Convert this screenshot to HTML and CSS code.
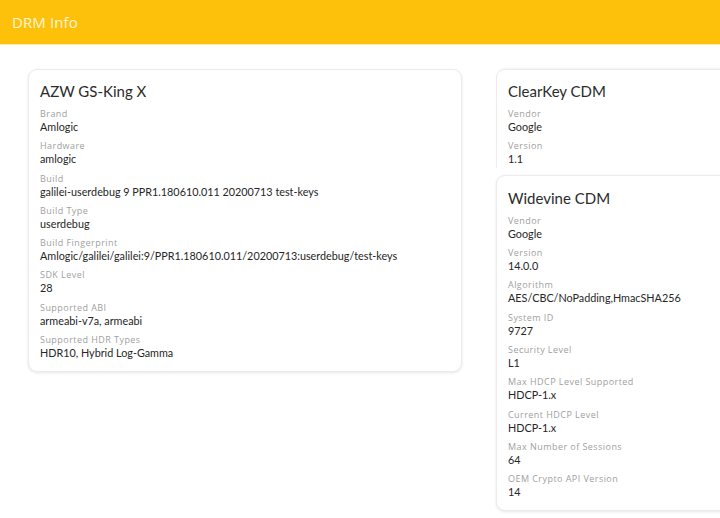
FILE: index.html
```html
<!DOCTYPE html>
<html>
<head>
<meta charset="utf-8">
<link rel="stylesheet" href="styles.css">
</head>
<body>
<header class="appbar"><span class="appbar-title">DRM Info</span></header>
<main class="content">
  <section class="card device">
    <h2 class="card-title">AZW GS-King X</h2>
    <div class="item"><div class="label">Brand</div><div class="value">Amlogic</div></div>
    <div class="item"><div class="label">Hardware</div><div class="value">amlogic</div></div>
    <div class="item"><div class="label">Build</div><div class="value">galilei-userdebug 9 PPR1.180610.011 20200713 test-keys</div></div>
    <div class="item"><div class="label">Build Type</div><div class="value">userdebug</div></div>
    <div class="item"><div class="label">Build Fingerprint</div><div class="value">Amlogic/galilei/galilei:9/PPR1.180610.011/20200713:userdebug/test-keys</div></div>
    <div class="item"><div class="label">SDK Level</div><div class="value">28</div></div>
    <div class="item"><div class="label">Supported ABI</div><div class="value">armeabi-v7a, armeabi</div></div>
    <div class="item"><div class="label">Supported HDR Types</div><div class="value">HDR10, Hybrid Log-Gamma</div></div>
  </section>
  <div class="column">
    <section class="card cdm clearkey">
      <h2 class="card-title">ClearKey CDM</h2>
      <div class="item"><div class="label">Vendor</div><div class="value">Google</div></div>
      <div class="item"><div class="label">Version</div><div class="value">1.1</div></div>
    </section>
    <section class="card cdm widevine">
      <h2 class="card-title">Widevine CDM</h2>
      <div class="item"><div class="label">Vendor</div><div class="value">Google</div></div>
      <div class="item"><div class="label">Version</div><div class="value">14.0.0</div></div>
      <div class="item"><div class="label">Algorithm</div><div class="value">AES/CBC/NoPadding,HmacSHA256</div></div>
      <div class="item"><div class="label">System ID</div><div class="value">9727</div></div>
      <div class="item"><div class="label">Security Level</div><div class="value">L1</div></div>
      <div class="item"><div class="label">Max HDCP Level Supported</div><div class="value">HDCP-1.x</div></div>
      <div class="item"><div class="label">Current HDCP Level</div><div class="value">HDCP-1.x</div></div>
      <div class="item"><div class="label">Max Number of Sessions</div><div class="value">64</div></div>
      <div class="item"><div class="label">OEM Crypto API Version</div><div class="value">14</div></div>
    </section>
  </div>
</main>
</body>
</html>
```

FILE: styles.css
```css
html, body {
  margin: 0;
  padding: 0;
  background: #ffffff;
  overflow: hidden;
  width: 720px;
  height: 518px;
}
body {
  font-family: "Open Sans", "Noto Sans", sans-serif;
  color: #262626;
}
.appbar {
  height: 45px;
  background: #fdc10b;
  border-bottom: 1px solid #fde9a8;
  display: flex;
  align-items: center;
  padding-left: 12px;
  box-sizing: border-box;
}
.appbar-title {
  color: #fff5d6;
  font-size: 15px;
  font-weight: 400;
  letter-spacing: 0.1px;
}
.content {
  display: flex;
  align-items: flex-start;
  gap: 34px;
  padding: 24px 0 0 28px;
}
.card {
  background: #fff;
  border: 1px solid #ececec;
  border-radius: 9px;
  box-shadow: 0 1px 3px rgba(0,0,0,0.10);
  padding: 10px 12px 11px 11px;
  box-sizing: border-box;
  flex: none;
}
.device {
  width: 434px;
}
.column {
  display: flex;
  flex-direction: column;
  gap: 7px;
  width: 250px;
  flex: none;
}
.clearkey {
  padding-bottom: 1px;
  border-bottom-color: transparent;
  border-bottom-left-radius: 0;
  border-bottom-right-radius: 0;
  box-shadow: 0 -1px 2px rgba(0,0,0,0.05);
}
.widevine {
  padding-top: 10.5px;
}
.card-title {
  margin: 0 0 5px 0;
  font-family: "Lato", "Open Sans", sans-serif;
  font-size: 15px;
  line-height: 22px;
  font-weight: 400;
  color: #2b2b2b;
}
.item + .item {
  margin-top: 5.3px;
}
.label {
  font-size: 9px;
  line-height: 13px;
  color: #a0a0a0;
  letter-spacing: 0.45px;
}
.value {
  font-family: "Lato", "Open Sans", sans-serif;
  font-size: 10.8px;
  line-height: 14px;
  color: #262626;
  white-space: nowrap;
}
```
